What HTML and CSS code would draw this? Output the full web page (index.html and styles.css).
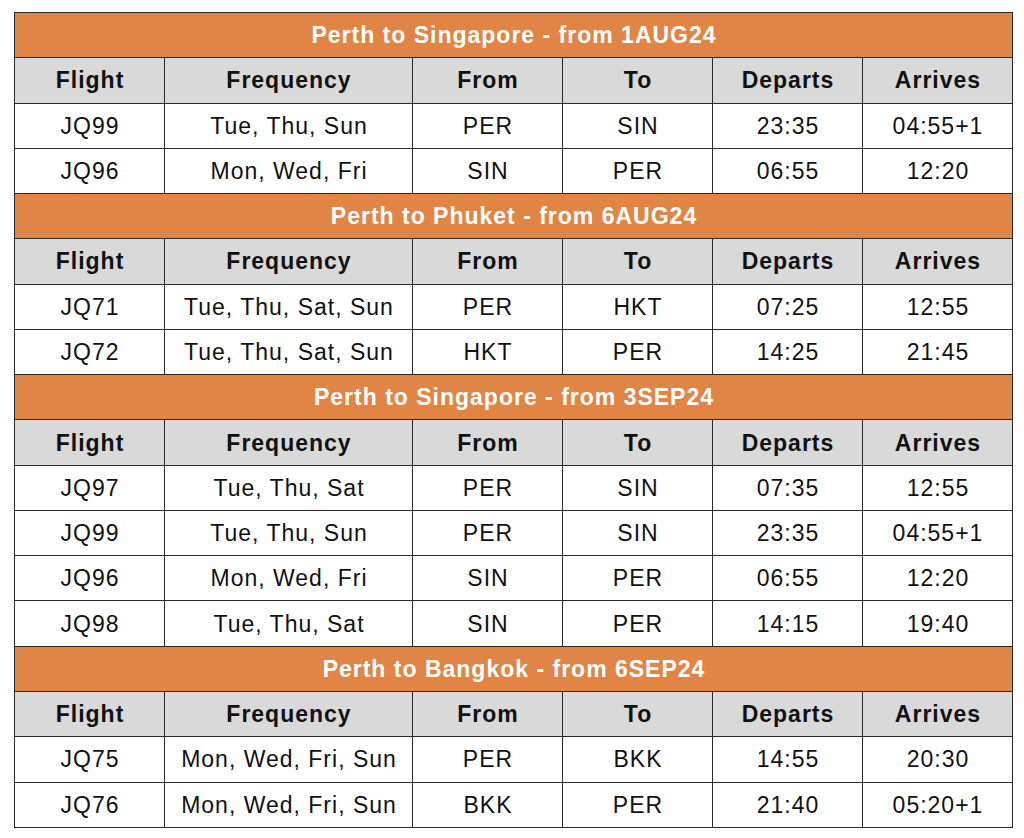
FILE: index.html
```html
<!DOCTYPE html>
<html>
<head>
<meta charset="utf-8">
<link rel="stylesheet" href="styles.css">
</head>
<body>
<table class="schedule">
  <colgroup>
    <col class="c-narrow"><col class="c-wide"><col class="c-narrow"><col class="c-narrow"><col class="c-narrow"><col class="c-narrow">
  </colgroup>
  <tbody>
    <tr class="title"><td colspan="6">Perth to Singapore - from 1AUG24</td></tr>
    <tr class="head"><td>Flight</td><td>Frequency</td><td>From</td><td>To</td><td>Departs</td><td>Arrives</td></tr>
    <tr><td>JQ99</td><td>Tue, Thu, Sun</td><td>PER</td><td>SIN</td><td>23:35</td><td>04:55+1</td></tr>
    <tr><td>JQ96</td><td>Mon, Wed, Fri</td><td>SIN</td><td>PER</td><td>06:55</td><td>12:20</td></tr>
    <tr class="title"><td colspan="6">Perth to Phuket - from 6AUG24</td></tr>
    <tr class="head"><td>Flight</td><td>Frequency</td><td>From</td><td>To</td><td>Departs</td><td>Arrives</td></tr>
    <tr><td>JQ71</td><td>Tue, Thu, Sat, Sun</td><td>PER</td><td>HKT</td><td>07:25</td><td>12:55</td></tr>
    <tr><td>JQ72</td><td>Tue, Thu, Sat, Sun</td><td>HKT</td><td>PER</td><td>14:25</td><td>21:45</td></tr>
    <tr class="title"><td colspan="6">Perth to Singapore - from 3SEP24</td></tr>
    <tr class="head"><td>Flight</td><td>Frequency</td><td>From</td><td>To</td><td>Departs</td><td>Arrives</td></tr>
    <tr><td>JQ97</td><td>Tue, Thu, Sat</td><td>PER</td><td>SIN</td><td>07:35</td><td>12:55</td></tr>
    <tr><td>JQ99</td><td>Tue, Thu, Sun</td><td>PER</td><td>SIN</td><td>23:35</td><td>04:55+1</td></tr>
    <tr><td>JQ96</td><td>Mon, Wed, Fri</td><td>SIN</td><td>PER</td><td>06:55</td><td>12:20</td></tr>
    <tr><td>JQ98</td><td>Tue, Thu, Sat</td><td>SIN</td><td>PER</td><td>14:15</td><td>19:40</td></tr>
    <tr class="title"><td colspan="6">Perth to Bangkok - from 6SEP24</td></tr>
    <tr class="head"><td>Flight</td><td>Frequency</td><td>From</td><td>To</td><td>Departs</td><td>Arrives</td></tr>
    <tr><td>JQ75</td><td>Mon, Wed, Fri, Sun</td><td>PER</td><td>BKK</td><td>14:55</td><td>20:30</td></tr>
    <tr><td>JQ76</td><td>Mon, Wed, Fri, Sun</td><td>BKK</td><td>PER</td><td>21:40</td><td>05:20+1</td></tr>
  </tbody>
</table>
</body>
</html>
```

FILE: styles.css
```css
html, body {
  margin: 0;
  padding: 0;
  background: #ffffff;
}
body {
  font-family: "Liberation Sans", Arial, sans-serif;
  color: #111111;
}
.schedule {
  border-collapse: collapse;
  table-layout: fixed;
  width: 998px;
  margin: 12px 0 0 14px;
}
.c-narrow { width: 150px; }
.c-wide { width: 248px; }
.schedule tr {
  height: 45.28px;
}
.schedule td {
  border: 1.5px solid #2a2a2a;
  padding: 0 0 0 1px;
  text-align: center;
  vertical-align: middle;
  font-size: 23px;
  letter-spacing: 1px;
  line-height: 24px;
  white-space: nowrap;
}
.title td {
  background: #e08545;
  color: #ffffff;
  font-weight: bold;
}
.head td {
  background: #d9d9d9;
  font-weight: bold;
}
```
